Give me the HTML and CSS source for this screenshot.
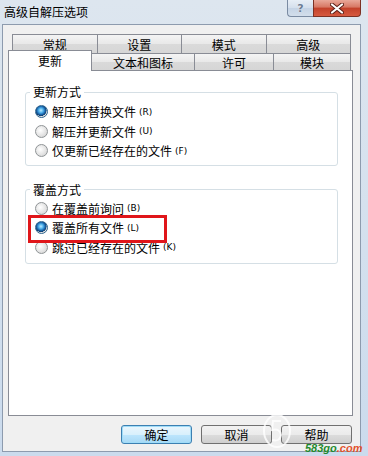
FILE: index.html
```html
<!DOCTYPE html>
<html lang="zh-CN">
<head>
  <meta charset="UTF-8" />
  <title>高级自解压选项</title>
  <link rel="stylesheet" href="styles.css">
</head>
<body>
  <div class="window">
    <div class="titlebar">
      <span class="title">高级自解压选项</span>
      <div class="caption-btns">
        <div class="cap help">?</div>
        <div class="cap close">
          <svg width="14" height="11" viewBox="0 0 14 11">
            <path d="M2 1.5 L12 9.5 M12 1.5 L2 9.5" stroke="#5a1f16" stroke-width="4" stroke-linecap="round"/>
            <path d="M2 1.5 L12 9.5 M12 1.5 L2 9.5" stroke="#fff" stroke-width="2.2" stroke-linecap="round"/>
          </svg>
        </div>
      </div>
    </div>

    <div class="client">
      <!-- Tabs -->
      <div class="tabs">
        <div class="tab-row back">
          <div class="tab">常规</div>
          <div class="tab">设置</div>
          <div class="tab">模式</div>
          <div class="tab">高级</div>
        </div>
        <div class="tab-row front">
          <div class="tab selected">更新</div>
          <div class="tab t-text">文本和图标</div>
          <div class="tab t-license">许可</div>
          <div class="tab t-module">模块</div>
        </div>
      </div>

      <!-- Tab page -->
      <div class="page">
        <fieldset class="group group-update">
          <legend>更新方式</legend>
          <div class="option"><span class="radio checked"></span>解压并替换文件<span class="key">(R)</span></div>
          <div class="option"><span class="radio"></span>解压并更新文件<span class="key">(U)</span></div>
          <div class="option"><span class="radio"></span>仅更新已经存在的文件<span class="key">(F)</span></div>
        </fieldset>

        <fieldset class="group group-overwrite">
          <legend>覆盖方式</legend>
          <div class="option"><span class="radio"></span>在覆盖前询问<span class="key">(B)</span></div>
          <div class="option marked"><span class="radio checked"></span>覆盖所有文件<span class="key">(L)</span></div>
          <div class="option"><span class="radio"></span>跳过已经存在的文件<span class="key">(K)</span></div>
        </fieldset>
      </div>

      <!-- Buttons -->
      <div class="actions">
        <div class="btn default">确定</div>
        <div class="btn">取消</div>
        <div class="btn">帮助</div>
      </div>

      <!-- Watermark -->
      <div class="wm-logo">
        <svg width="30" height="36" viewBox="0 0 30 36">
          <ellipse cx="15" cy="18" rx="13" ry="16" fill="none" stroke="rgba(255,255,255,0.8)" stroke-width="2"/>
          <path d="M19 8 L11 8 L10 17 Q18 15 19 22 Q18 29 10 27" fill="none" stroke="rgba(255,255,255,0.8)" stroke-width="2"/>
        </svg>
      </div>
      <div class="wm-site"><span class="g">583go</span><span class="r">.com</span></div>
    </div>
  </div>
</body>
</html>
```

FILE: styles.css
```css
* {
  box-sizing: border-box;
}

body {
  margin: 0;
  font-family: "Noto Sans CJK SC", sans-serif;
  font-size: 12px;
  color: #000;
}

.window {
  width: 368px;
  height: 456px;
  padding: 0 7px 4px 2px;
  background: linear-gradient(to bottom, #dde6ef, #cbdbed);
  display: flex;
  flex-direction: column;
}

/* Title bar */
.titlebar {
  height: 24px;
  display: flex;
  align-items: flex-start;
}

.title {
  padding-left: 2px;
  line-height: 24px;
}

.caption-btns {
  margin-left: auto;
  display: flex;
}

.cap {
  height: 17px;
  display: flex;
  align-items: center;
  justify-content: center;
  border: 1px solid #7a8ba2;
  border-top: none;
}

.help {
  width: 26px;
  border-right: none;
  border-bottom-left-radius: 4px;
  background: linear-gradient(to bottom, #e7eef6, #d4dfec 50%, #c4d3e5 50%, #d2deeb);
  color: #6b7d94;
  font-family: "DejaVu Sans", sans-serif;
  font-weight: bold;
  font-size: 11px;
  text-shadow: 0 0 1px #fff;
}

.close {
  width: 48px;
  border-color: #7c3124;
  border-bottom-right-radius: 4px;
  background: linear-gradient(to bottom, #e9a899, #d77763 45%, #c2412a 50%, #d65a40);
}

/* Client area */
.client {
  flex: 1;
  position: relative;
  border: 1px solid #8d9bae;
  background: #f0f0f0;
  display: flex;
  flex-direction: column;
}

.tabs {
  margin: 9px 0 0 5px;
  width: 345px;
}

.tab-row {
  display: flex;
}

.tab {
  border: 1px solid #898c95;
  border-bottom: none;
  background: linear-gradient(to bottom, #f4f4f4, #e8e8e8 50%, #dadada 50%, #d6d6d6);
  text-align: center;
}

.tab + .tab {
  margin-left: -1px;
}

.back {
  margin: 0 2px 0 4px;
}

.back .tab {
  flex: 1;
  height: 19px;
  padding-top: 2px;
  line-height: 16px;
}

.front {
  height: 17px;
  margin-right: 2px;
  align-items: flex-start;
}

.front .tab {
  height: 17px;
  padding-top: 2px;
  line-height: 14px;
}

.front .tab.selected {
  position: relative;
  z-index: 1;
  width: 84px;
  height: 21px;
  margin-top: -3px;
  padding-top: 3px;
  background: #fff;
}

.t-text {
  width: 104px;
}

.t-license {
  width: 80px;
}

.t-module {
  flex: 1;
}

/* Tab page */
.page {
  width: 345px;
  height: 346px;
  margin-left: 5px;
  border: 1px solid #898c95;
  background: #fff;
  padding: 14px 14px 0 16px;
}

.group {
  margin: 0;
  border: 1px solid #d5dfe5;
  border-radius: 3px;
}

.group legend {
  margin-left: -5px;
  padding: 0 3px;
  line-height: 14px;
}

.group-update {
  padding: 3px 0 4px 9px;
}

.group-overwrite {
  margin-top: 17px;
  padding: 2px 0 6px 9px;
}

.option {
  height: 19.5px;
  display: flex;
  align-items: center;
}

.option.marked {
  position: relative;
}

.option.marked::after {
  content: "";
  position: absolute;
  left: -7px;
  top: -3px;
  width: 133px;
  height: 22px;
  border: 3px solid #e0161a;
}

.key {
  margin-left: 3px;
  font-family: "DejaVu Sans", sans-serif;
  font-size: 9px;
}

.radio {
  width: 13px;
  height: 13px;
  margin-right: 4px;
  border-radius: 50%;
  border: 1px solid #8f9496;
  background: radial-gradient(circle at 40% 40%, #ffffff 0, #e9e9e9 45%, #cdcdcd 100%);
}

.radio.checked {
  border-color: #2c628b;
  background: radial-gradient(circle at 45% 40%, #bfe9ff 0, #52b4ec 25%, #1d6ab2 45%, #0f3f70 60%, #e6e6e6 65%, #cfcfcf 100%);
}

/* Buttons */
.actions {
  margin-top: 9px;
  padding-right: 8px;
  display: flex;
  justify-content: flex-end;
  gap: 9px;
}

.btn {
  width: 71px;
  height: 19px;
  border: 1px solid #707070;
  border-radius: 3px;
  background: linear-gradient(to bottom, #f2f2f2, #ebebeb 50%, #dddddd 50%, #cfcfcf);
  text-align: center;
  line-height: 17px;
}

.btn.default {
  border-color: #3c7fb1;
  background: linear-gradient(to bottom, #eaf6fd, #d9f0fc 50%, #bee6fd 50%, #a7d9f5);
  box-shadow: inset 0 0 0 1px #9fdcf8;
}

/* Watermark */
.wm-logo {
  position: absolute;
  left: 259px;
  top: 388px;
}

.wm-site {
  position: absolute;
  left: 302px;
  top: 418px;
  font-family: "Liberation Sans", sans-serif;
  font-size: 11px;
  line-height: 10px;
  font-weight: bold;
  font-style: italic;
}

.wm-site .g {
  color: #1f8a2c;
}

.wm-site .r {
  color: #e2532e;
}
```
